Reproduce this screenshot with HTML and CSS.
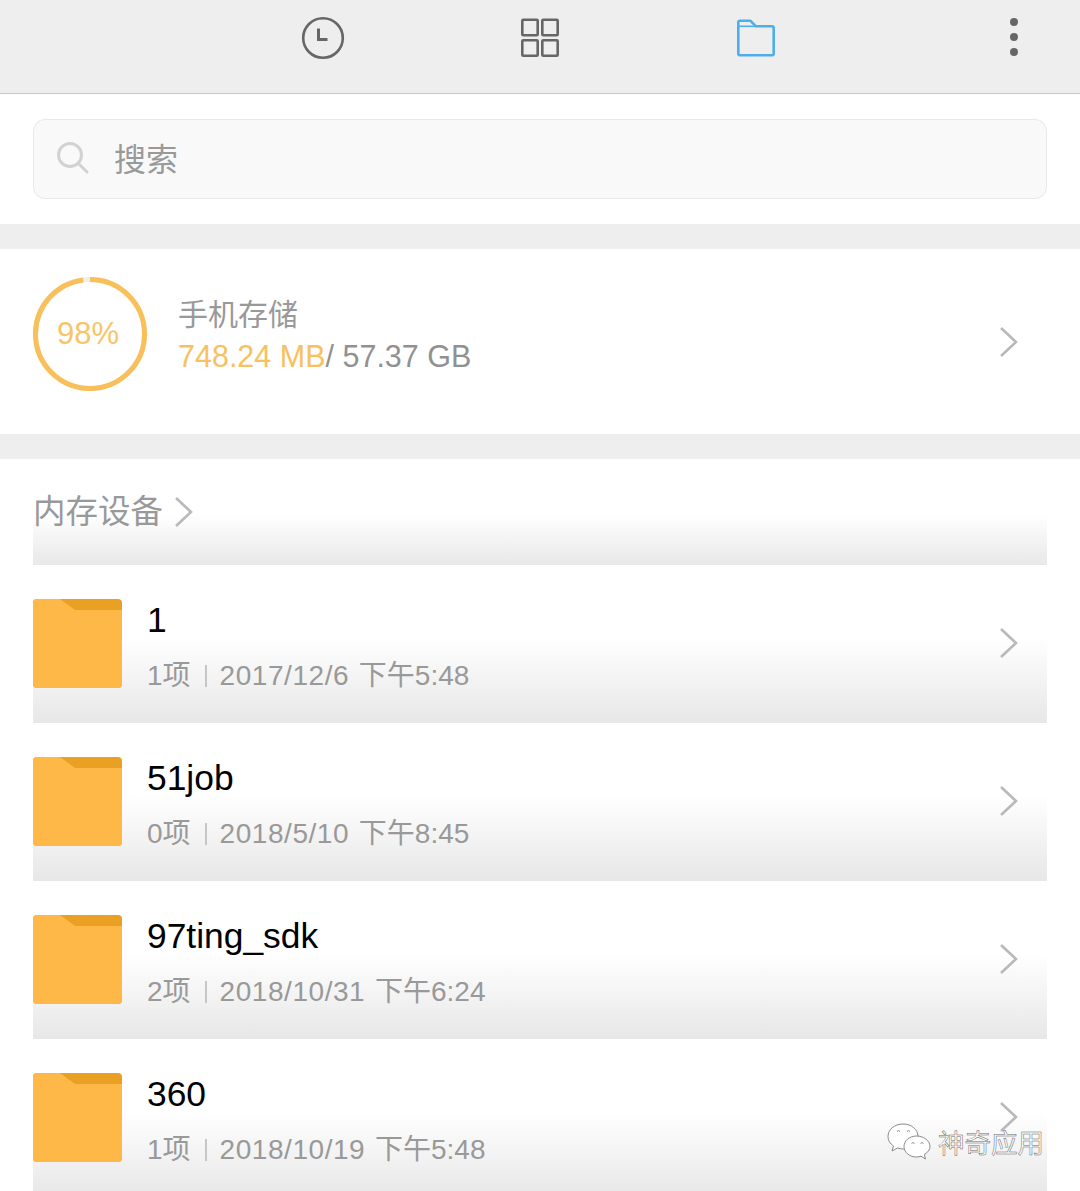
FILE: index.html
```html
<!DOCTYPE html>
<html lang="zh-CN">
<head>
    <meta charset="UTF-8">
    <meta name="viewport" content="width=device-width, initial-scale=1.0">
    <title>文件管理</title>
    <link rel="stylesheet" href="styles.css">
</head>
<body>

    <div class="topbar">
        <div class="tab tab-clock">
            <svg width="44" height="44" viewBox="0 0 44 44" fill="none" stroke="#666" stroke-width="2.6">
                <circle cx="22" cy="22" r="19.8"/>
                <path d="M17.5 12.5V23.5H26.5" stroke-width="3"/>
            </svg>
        </div>
        <div class="tab">
            <svg width="40" height="40" viewBox="0 0 40 40" fill="none" stroke="#666" stroke-width="2.6">
                <rect x="2.3" y="1.8" width="15.4" height="15.4" rx="1"/>
                <rect x="22.3" y="1.8" width="15.4" height="15.4" rx="1"/>
                <rect x="2.3" y="22.3" width="15.4" height="15.4" rx="1"/>
                <rect x="22.3" y="22.3" width="15.4" height="15.4" rx="1"/>
            </svg>
        </div>
        <div class="tab">
            <svg width="40" height="40" viewBox="0 0 40 40" fill="none" stroke="#4eaeea" stroke-width="2.6" stroke-linejoin="round">
                <path d="M3.800 2.800H14.500L20 8.300H36.200A1.500 1.500 0 0 1 37.700 9.800V35.700A1.500 1.500 0 0 1 36.200 37.200H3.800A1.500 1.500 0 0 1 2.300 35.700V4.300A1.500 1.500 0 0 1 3.800 2.800Z"/>
                <path d="M2.300 8.300H20" stroke-width="1.600"/>
            </svg>
        </div>
        <div class="dots"><i></i><i></i><i></i></div>
    </div>

    <div class="search-wrap">
        <div class="search">
            <svg width="34" height="34" viewBox="0 0 34 34" fill="none" stroke="#d2d2d2" stroke-width="3">
                <circle cx="14" cy="14" r="11.5"/>
                <path d="M22.5 22.5L31 31" stroke-linecap="round"/>
            </svg>
            <span>搜索</span>
        </div>
    </div>

    <div class="storage">
        <div class="ring">
            <svg width="114" height="114" viewBox="0 0 114 114" fill="none" stroke-width="5">
                <circle cx="57" cy="57" r="54.5" stroke="#eeeeee"/>
                <circle class="ring-arc" cx="57" cy="57" r="54.5" stroke="#f9bf59" pathLength="100" stroke-dasharray="98 2"/>
            </svg>
            <span class="ring-text">98%</span>
        </div>
        <div class="storage-info">
            <div class="storage-title">手机存储</div>
            <div class="storage-size"><span class="used">748.24 MB</span>/ 57.37 GB</div>
        </div>
        <svg class="chevron" width="20" height="32" viewBox="0 0 20 32" fill="none" stroke="#b9b9b9" stroke-width="2.6">
            <path d="M2 2L17 16L2 30"/>
        </svg>
    </div>

    <div class="list">
        <div class="list-head">
            <span>内存设备</span>
            <svg width="20" height="32" viewBox="0 0 20 32" fill="none" stroke="#b9b9b9" stroke-width="2.6">
                <path d="M2 2L17 16L2 30"/>
            </svg>
        </div>

        <div class="row">
            <svg class="folder" width="89" height="89" viewBox="0 0 89 89">
                <rect width="89" height="89" rx="4" fill="#e9a023"/>
                <path d="M4 0H27L42 11H89V85A4 4 0 0 1 85 89H4A4 4 0 0 1 0 85V4A4 4 0 0 1 4 0Z" fill="#fdb848"/>
            </svg>
            <div class="row-text">
                <div class="name">1</div>
                <div class="meta">1项<i class="sep"></i><span class="date">2017/12/6</span> 下午5:48</div>
            </div>
            <svg class="chevron row-chevron" width="20" height="32" viewBox="0 0 20 32" fill="none" stroke="#b9b9b9" stroke-width="2.6">
                <path d="M2 2L17 16L2 30"/>
            </svg>
        </div>

        <div class="row">
            <svg class="folder" width="89" height="89" viewBox="0 0 89 89">
                <rect width="89" height="89" rx="4" fill="#e9a023"/>
                <path d="M4 0H27L42 11H89V85A4 4 0 0 1 85 89H4A4 4 0 0 1 0 85V4A4 4 0 0 1 4 0Z" fill="#fdb848"/>
            </svg>
            <div class="row-text">
                <div class="name">51job</div>
                <div class="meta">0项<i class="sep"></i><span class="date">2018/5/10</span> 下午8:45</div>
            </div>
            <svg class="chevron row-chevron" width="20" height="32" viewBox="0 0 20 32" fill="none" stroke="#b9b9b9" stroke-width="2.6">
                <path d="M2 2L17 16L2 30"/>
            </svg>
        </div>

        <div class="row">
            <svg class="folder" width="89" height="89" viewBox="0 0 89 89">
                <rect width="89" height="89" rx="4" fill="#e9a023"/>
                <path d="M4 0H27L42 11H89V85A4 4 0 0 1 85 89H4A4 4 0 0 1 0 85V4A4 4 0 0 1 4 0Z" fill="#fdb848"/>
            </svg>
            <div class="row-text">
                <div class="name">97ting_sdk</div>
                <div class="meta">2项<i class="sep"></i><span class="date">2018/10/31</span> 下午6:24</div>
            </div>
            <svg class="chevron row-chevron" width="20" height="32" viewBox="0 0 20 32" fill="none" stroke="#b9b9b9" stroke-width="2.6">
                <path d="M2 2L17 16L2 30"/>
            </svg>
        </div>

        <div class="row">
            <svg class="folder" width="89" height="89" viewBox="0 0 89 89">
                <rect width="89" height="89" rx="4" fill="#e9a023"/>
                <path d="M4 0H27L42 11H89V85A4 4 0 0 1 85 89H4A4 4 0 0 1 0 85V4A4 4 0 0 1 4 0Z" fill="#fdb848"/>
            </svg>
            <div class="row-text">
                <div class="name">360</div>
                <div class="meta">1项<i class="sep"></i><span class="date">2018/10/19</span> 下午5:48</div>
            </div>
            <svg class="chevron row-chevron" width="20" height="32" viewBox="0 0 20 32" fill="none" stroke="#b9b9b9" stroke-width="2.6">
                <path d="M2 2L17 16L2 30"/>
            </svg>
        </div>
    </div>

    <div class="watermark">
        <svg width="44" height="38" viewBox="0 0 44 38" fill="#fff" stroke="#8a8a8a" stroke-width="1">
            <path d="M16 1C7.500 1 1 6.500 1 13.500C1 17.500 3 20.500 6.500 23L5 28L10.500 25C12.500 25.700 14.500 26 16.500 26C25 26 31 20.500 31 13.500C31 6.500 24.500 1 16 1Z"/>
            <path d="M29.500 13C22.500 13 17 17.700 17 23.500C17 29.300 22.500 34 29.500 34C31 34 32.500 33.700 34 33.200L38.500 36L37.300 31.500C40.700 29.500 43 26.700 43 23.500C43 17.700 36.500 13 29.500 13Z"/>
            <path d="M10 8.500L11.500 7.500L13 8.500M20 8.500L21.500 7.500L23 8.500M24.500 20.500L26 19.500L27.500 20.500M33.500 20.500L35 19.500L36.500 20.500" fill="none"/>
        </svg>
        <span>神奇应用</span>
    </div>

</body>
</html>
```

FILE: styles.css
```css
* {
    padding: 0;
    margin: 0;
    box-sizing: border-box;
}

html, body {
    height: 1191px;
    overflow: hidden;
}

body {
    position: relative;
    background-color: white;
    font-family: "Liberation Sans", "Noto Sans CJK SC", sans-serif;
}

.topbar {
    height: 94px;
    padding-left: 216px;
    padding-bottom: 18px;
    display: grid;
    grid-template-columns: repeat(3, 216px) 1fr;
    align-items: center;
    background-color: #eeeeee;
    border-bottom: 1px solid #c6c6c6;
}

.tab {
    display: flex;
    justify-content: center;
}

.tab-clock {
    padding-right: 2px;
}

.dots {
    margin-left: 146px;
    display: flex;
    flex-direction: column;
    gap: 7px;
    margin-top: -2px;
}

.dots i {
    width: 8px;
    height: 8px;
    border-radius: 50%;
    background-color: #666;
}

.search-wrap {
    height: 155px;
    padding: 25px 33px;
    border-bottom: 25px solid #eeeeee;
}

.search {
    height: 80px;
    padding-left: 22px;
    padding-bottom: 2px;
    display: flex;
    align-items: center;
    gap: 24px;
    background-color: #f9f9f9;
    border: 1px solid #e8e8e8;
    border-radius: 12px;
    color: #999;
    font-size: 32px;
}

.search span {
    margin-top: -2px;
}

.storage {
    height: 210px;
    padding: 0 33px;
    display: flex;
    align-items: center;
    border-bottom: 25px solid #eeeeee;
}

.ring {
    position: relative;
    width: 114px;
    height: 114px;
    margin-top: -15px;
}

.ring-arc {
    transform: rotate(-90deg);
    transform-origin: center;
}

.ring-text {
    position: absolute;
    top: 0;
    left: -2px;
    width: 100%;
    line-height: 113px;
    text-align: center;
    color: #f9c469;
    font-size: 31px;
}

.storage-info {
    margin-left: 31px;
    margin-top: -14px;
    flex: 1;
}

.storage-title {
    color: #999;
    font-size: 30px;
    line-height: 42px;
}

.storage-size {
    color: #919191;
    font-size: 30.5px;
    line-height: 40px;
}

.used {
    color: #f8c160;
}

.chevron {
    margin-right: 28px;
    flex-shrink: 0;
}

.row-chevron {
    margin-top: -2px;
}

.list {
    padding: 0 33px;
}

.list-head {
    height: 106px;
    padding-top: 34px;
    display: flex;
    align-items: flex-start;
    gap: 11px;
    color: #999;
    font-size: 32.5px;
    line-height: 38px;
    background: linear-gradient(to bottom, white 52%, #e8e8e8 100%);
}

.list-head svg {
    margin-top: 3px;
}

.row {
    height: 158px;
    display: flex;
    align-items: center;
    background: linear-gradient(to bottom, white 46%, #e7e7e7 100%);
}

.folder {
    flex-shrink: 0;
    margin-top: -2px;
}

.row-text {
    flex: 1;
    margin-left: 25px;
    padding-top: 5px;
}

.name {
    color: black;
    font-size: 35.4px;
    line-height: 40px;
}

.meta {
    margin-top: 19px;
    color: #999;
    font-size: 28px;
    line-height: 34px;
    word-spacing: 2px;
    display: flex;
    align-items: center;
    white-space: pre;
}

.date {
    letter-spacing: 0.55px;
}

.sep {
    width: 2px;
    height: 22px;
    margin: 0 13px 0 14px;
    background-color: #c6c6c6;
}

.watermark {
    position: absolute;
    left: 887px;
    top: 1122px;
    display: flex;
    align-items: center;
    gap: 7px;
    color: white;
    font-size: 26.5px;
    -webkit-text-stroke: 0.5px #666;
}
```
